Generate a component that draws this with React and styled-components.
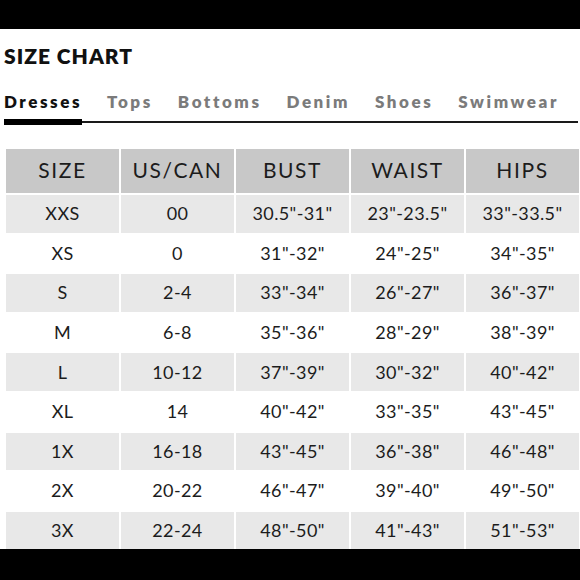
import styled, { createGlobalStyle } from "styled-components";

const GlobalStyle = createGlobalStyle`
  html, body {
    margin: 0;
    padding: 0;
    background: #fff;
  }
  body {
    font-family: "Lato", "Liberation Sans", sans-serif;
    color: #1c1c1c;
  }
`;

const Page = styled.div`
  width: 580px;
  height: 580px;
  display: flex;
  flex-direction: column;
  overflow: hidden;
`;

const BlackBar = styled.div`
  background: #000;
  height: ${(props) => (props.grow ? "auto" : "29px")};
  flex: ${(props) => (props.grow ? "1" : "none")};
`;

const Title = styled.h1`
  margin: 14px 0 0 4px;
  font-size: 21px;
  line-height: 26px;
  font-weight: 800;
  letter-spacing: 1px;
  color: #111;
`;

const Tabs = styled.div`
  display: flex;
  margin: 22px 2px 0 4px;
  border-bottom: 2px solid #1a1a1a;
`;

const Tab = styled.div`
  position: relative;
  font-size: 17px;
  line-height: 22px;
  font-weight: 800;
  letter-spacing: 2.55px;
  color: ${(props) => (props.active ? "#111" : "#7b7b7b")};
  margin-right: 25px;
  padding-bottom: 8px;

  &:last-child {
    margin-right: 0;
  }

  &::after {
    content: "";
    display: ${(props) => (props.active ? "block" : "none")};
    position: absolute;
    left: 0;
    right: 0;
    bottom: -4px;
    height: 6px;
    background: #000;
  }
`;

const Table = styled.div`
  display: grid;
  grid-template-columns: repeat(5, 113px);
  grid-template-rows: 44px;
  grid-auto-rows: 37.6px;
  gap: 2px;
  margin: 26px 0 0 6px;
`;

const Cell = styled.div`
  display: flex;
  align-items: center;
  justify-content: center;
  padding-bottom: ${(props) => (props.head ? "4px" : "1px")};
  box-sizing: border-box;
  background: ${(props) =>
    props.head ? "#c8c8c8" : props.shade ? "#e8e8e8" : "#fff"};
  font-size: ${(props) => (props.head ? "21px" : "18px")};
  letter-spacing: ${(props) => (props.head ? "1.6px" : "0.4px")};
  font-weight: 400;
  color: #1c1c1c;
`;

const tabs = ["Dresses", "Tops", "Bottoms", "Denim", "Shoes", "Swimwear"];

const head = ["SIZE", "US/CAN", "BUST", "WAIST", "HIPS"];

const rows = [
  ["XXS", "00", '30.5"-31"', '23"-23.5"', '33"-33.5"'],
  ["XS", "0", '31"-32"', '24"-25"', '34"-35"'],
  ["S", "2-4", '33"-34"', '26"-27"', '36"-37"'],
  ["M", "6-8", '35"-36"', '28"-29"', '38"-39"'],
  ["L", "10-12", '37"-39"', '30"-32"', '40"-42"'],
  ["XL", "14", '40"-42"', '33"-35"', '43"-45"'],
  ["1X", "16-18", '43"-45"', '36"-38"', '46"-48"'],
  ["2X", "20-22", '46"-47"', '39"-40"', '49"-50"'],
  ["3X", "22-24", '48"-50"', '41"-43"', '51"-53"'],
];

const App = () => {
  return (
    <Page>
      <GlobalStyle />
      <BlackBar />
      <Title>SIZE CHART</Title>
      <Tabs>
        {tabs.map((t, i) => (
          <Tab key={t} active={i === 0}>
            {t}
          </Tab>
        ))}
      </Tabs>
      <Table>
        {head.map((h) => (
          <Cell key={h} head>
            {h}
          </Cell>
        ))}
        {rows.map((row, r) =>
          row.map((v, c) => (
            <Cell key={r + "-" + c} shade={r % 2 === 0}>
              {v}
            </Cell>
          ))
        )}
      </Table>
      <BlackBar grow />
    </Page>
  );
};

export default App;
